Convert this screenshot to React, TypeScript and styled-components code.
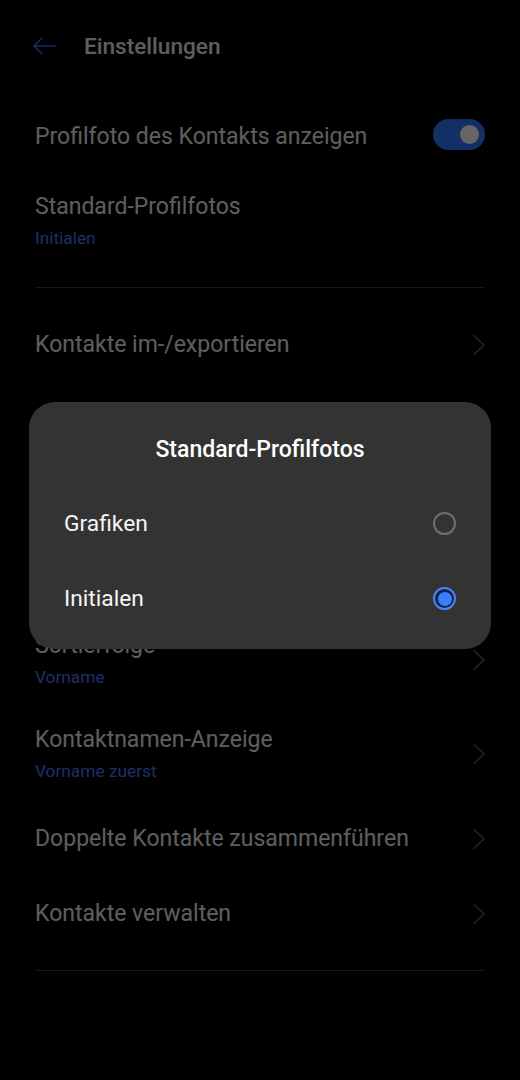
import React from "react";
import styled, { createGlobalStyle } from "styled-components";

const Global = createGlobalStyle`
  html, body { margin: 0; padding: 0; background: #000; }
  body { font-family: Roboto, "Noto Sans", sans-serif; -webkit-font-smoothing: antialiased; }
  * { box-sizing: border-box; }
`;

const Page = styled.div`
  position: relative;
  width: 520px;
  height: 1080px;
  background: #000;
  overflow: hidden;
`;

const Header = styled.header`
  display: flex;
  align-items: center;
  height: 92px;
  padding: 0 0 0 32px;
  gap: 27px;
`;

const BackButton = styled.div`
  display: flex;
  align-items: center;
  width: 25px;
  height: 24px;
  color: #3a6df0;
`;

const HeaderTitle = styled.h1`
  margin: 0;
  font-size: 22.6px;
  font-weight: 500;
  color: #ececec;
`;

const List = styled.div`
  display: flex;
  flex-direction: column;
  padding: 7px 35px 0 35px;
`;

const Row = styled.div<{ $tall?: boolean }>`
  display: flex;
  align-items: center;
  justify-content: space-between;
  height: ${(p) => (p.$tall ? 94 : 75)}px;
`;

const TextCol = styled.div`
  display: flex;
  flex-direction: column;
  gap: 6px;
`;

const Title = styled.div`
  font-size: 23px;
  color: #ebebeb;
  line-height: 28px;
`;

const Sub = styled.div`
  font-size: 17.3px;
  color: #4a78f5;
  line-height: 22px;
`;

const Divider = styled.div`
  height: 1px;
  background: #3a3a3a;
  margin: 19px 0 19px 0;
`;

/* part of the list hidden behind the dialog */
const CoveredSection = styled.div`
  height: 231px;
`;

const Toggle = styled.div`
  width: 52px;
  height: 31px;
  border-radius: 16px;
  background: #2f78ff;
  display: flex;
  align-items: center;
  justify-content: flex-end;
  padding-right: 6px;
  margin-bottom: 5px;
`;

const Knob = styled.div`
  width: 19px;
  height: 19px;
  border-radius: 50%;
  background: #fff;
`;

const Chevron = styled.svg`
  width: 14px;
  height: 22px;
  flex-shrink: 0;
  margin-right: -1px;
`;

const Overlay = styled.div`
  position: absolute;
  inset: 0;
  background: rgba(0, 0, 0, 0.6);
`;

const Dialog = styled.div`
  position: absolute;
  left: 29px;
  right: 29px;
  top: 402px;
  height: 247px;
  background: #333333;
  border-radius: 26px;
  display: flex;
  flex-direction: column;
  padding: 34px 35px 0 35px;
`;

const DialogTitle = styled.div`
  text-align: center;
  font-size: 23px;
  font-weight: 500;
  color: #fff;
  line-height: 28px;
  margin-bottom: 22px;
`;

const Option = styled.div`
  display: flex;
  align-items: center;
  justify-content: space-between;
  height: 75px;
`;

const OptionLabel = styled.div`
  font-size: 22.8px;
  color: #f5f5f5;
`;

const Radio = styled.div<{ $checked?: boolean }>`
  width: 23px;
  height: 23px;
  border-radius: 50%;
  border: 2px solid ${(p) => (p.$checked ? "#4b84f4" : "#707070")};
  display: flex;
  align-items: center;
  justify-content: center;
  background: ${(p) => (p.$checked ? "#14254a" : "transparent")};
`;

const RadioDot = styled.div`
  width: 14px;
  height: 14px;
  border-radius: 50%;
  background: #3b7dff;
`;

const ChevronIcon = () => (
  <Chevron viewBox="0 0 14 22">
    <path d="M2 1.5 L12 11 L2 20.5" fill="none" stroke="#5a5a5a" strokeWidth="1.6" strokeLinecap="round" strokeLinejoin="round" />
  </Chevron>
);

export default function App() {
  return (
    <>
      <Global />
      <Page>
        <Header>
          <BackButton>
            <svg width="25" height="20" viewBox="0 0 25 20">
              <path d="M24 10 H2 M10 2 L2 10 L10 18" fill="none" stroke="currentColor" strokeWidth="1.6" strokeLinecap="round" strokeLinejoin="round" />
            </svg>
          </BackButton>
          <HeaderTitle>Einstellungen</HeaderTitle>
        </Header>
        <List>
          <Row>
            <Title>Profilfoto des Kontakts anzeigen</Title>
            <Toggle>
              <Knob />
            </Toggle>
          </Row>
          <Row $tall>
            <TextCol>
              <Title>Standard-Profilfotos</Title>
              <Sub>Initialen</Sub>
            </TextCol>
          </Row>
          <Divider />
          <Row>
            <Title>Kontakte im-/exportieren</Title>
            <ChevronIcon />
          </Row>
          <CoveredSection />
          <Row $tall>
            <TextCol>
              <Title>Sortierfolge</Title>
              <Sub>Vorname</Sub>
            </TextCol>
            <ChevronIcon />
          </Row>
          <Row $tall>
            <TextCol>
              <Title>Kontaktnamen-Anzeige</Title>
              <Sub>Vorname zuerst</Sub>
            </TextCol>
            <ChevronIcon />
          </Row>
          <Row>
            <Title>Doppelte Kontakte zusammenführen</Title>
            <ChevronIcon />
          </Row>
          <Row>
            <Title>Kontakte verwalten</Title>
            <ChevronIcon />
          </Row>
          <Divider />
        </List>
        <Overlay />
        <Dialog>
          <DialogTitle>Standard-Profilfotos</DialogTitle>
          <Option>
            <OptionLabel>Grafiken</OptionLabel>
            <Radio />
          </Option>
          <Option>
            <OptionLabel>Initialen</OptionLabel>
            <Radio $checked>
              <RadioDot />
            </Radio>
          </Option>
        </Dialog>
      </Page>
    </>
  );
}
